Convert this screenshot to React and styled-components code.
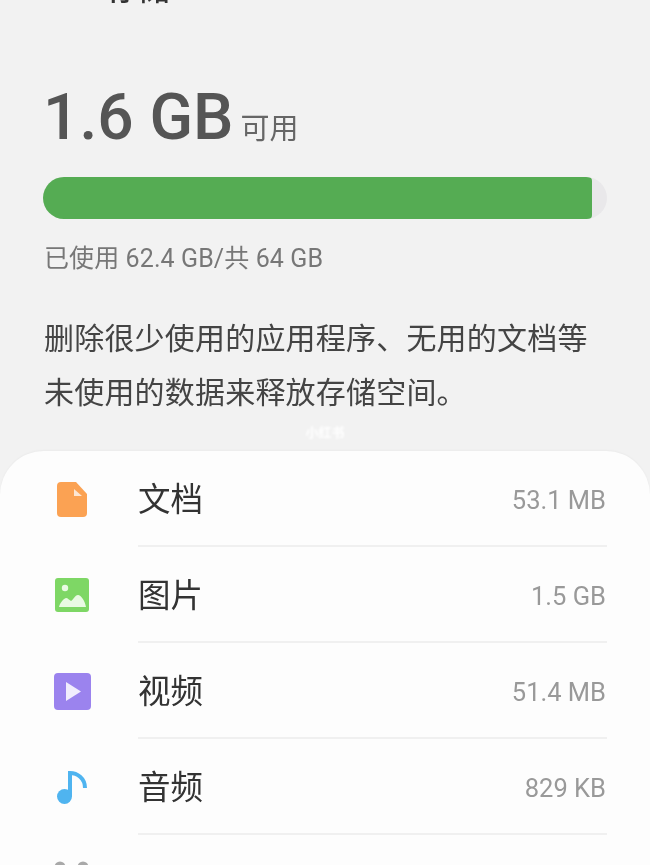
import React from 'react';
import styled, { createGlobalStyle } from 'styled-components';

const GlobalStyle = createGlobalStyle`
  html, body {
    margin: 0;
    padding: 0;
    height: 865px;
    overflow: hidden;
    background: #f2f2f2;
  }
`;

const Page = styled.div`
  width: 650px;
  height: 865px;
  overflow: hidden;
  background: #f2f2f2;
  font-family: Roboto, "Noto Sans CJK SC", sans-serif;
  filter: blur(0.5px);
`;

const TitleClip = styled.div`
  height: 6px;
  padding-left: 106px;
  display: flex;
  align-items: flex-end;
  overflow: hidden;
`;

const Title = styled.div`
  font-size: 32px;
  line-height: 34px;
  flex: none;
  font-weight: 500;
  color: #333;
`;

const Summary = styled.section`
  padding: 72px 43px 0;
`;

const Free = styled.div`
  display: flex;
  align-items: baseline;
  gap: 7px;
  height: 88px;
`;

const FreeSize = styled.span`
  font-size: 64px;
  line-height: 80px;
  font-weight: 500;
  color: #555;
`;

const FreeLabel = styled.span`
  font-size: 29px;
  color: #666;
`;

const Track = styled.div`
  height: 42px;
  margin-top: 11px;
  border-radius: 21px;
  background: #e9e8ea;
  overflow: hidden;
`;

const Fill = styled.div`
  height: 100%;
  background: #55ac53;
  border-radius: 0 4px 4px 0;
`;

const Usage = styled.div`
  margin-top: 22px;
  padding-left: 1px;
  font-size: 25px;
  letter-spacing: 0.1px;
  line-height: 36px;
  color: #777;
`;

const Hint = styled.p`
  margin: 35px 0 0;
  padding-left: 1px;
  font-size: 30px;
  letter-spacing: 0.2px;
  line-height: 54px;
  color: #444;
`;

const Watermark = styled.div`
  height: 22px;
  margin-top: 2px;
  margin-bottom: 7px;
  text-align: center;
  font-size: 13px;
  line-height: 22px;
  font-weight: 700;
  color: #fff;
  filter: blur(0.8px);
`;

const Card = styled.section`
  background: #fdfdfd;
  border-radius: 44px 44px 0 0;
  box-shadow: 0 -1px 2px rgba(0, 0, 0, 0.03);
`;

const Row = styled.div`
  height: 96px;
  display: grid;
  grid-template-columns: 138px 1fr;
  align-items: center;
`;

const IconCell = styled.div`
  display: flex;
  justify-content: center;
  padding-left: 6px;
`;

const RowBody = styled.div`
  height: 100%;
  margin-right: 43px;
  display: flex;
  align-items: center;
  justify-content: space-between;
  box-sizing: border-box;
  border-bottom: 2px solid #f0f0f0;
`;

const Label = styled.span`
  font-size: 32.5px;
  line-height: 40px;
  color: #333;
  margin-top: 3px;
`;

const Value = styled.span`
  font-size: 25.5px;
  color: #999;
  margin-top: 3px;
  margin-right: 1px;
`;

const DocIcon = () => (
  <svg width="30" height="35" viewBox="0 0 30 35">
    <path d="M4 0h15l11 12v19a4 4 0 0 1-4 4H4a4 4 0 0 1-4-4V4a4 4 0 0 1 4-4z" fill="#fba253" />
    <path d="M17 7l8 7h-8z" fill="#fde6d2" />
  </svg>
);

const ImageIcon = () => (
  <svg width="34" height="34" viewBox="0 0 34 34">
    <rect width="34" height="34" rx="3" fill="#7ed765" />
    <circle cx="10" cy="10" r="3.2" fill="#e9fae3" />
    <path d="M4 29c1-4 4-8 7-9 2 0 3 2 5 3 2-1 4-6 7-6 3 0 7 6 8 12z" fill="#e9fae3" />
  </svg>
);

const VideoIcon = () => (
  <svg width="37" height="37" viewBox="0 0 37 37">
    <rect width="37" height="37" rx="4" fill="#9b83ee" />
    <path d="M12 9l15 9.500-15 9.500z" fill="#f1edfd" />
  </svg>
);

const AudioIcon = () => (
  <svg width="30" height="33" viewBox="0 0 30 33">
    <circle cx="7.500" cy="25.500" r="7.500" fill="#4fb4f0" />
    <path d="M13 25V2c7 0 15 5 15 15" fill="none" stroke="#4fb4f0" strokeWidth="4" />
  </svg>
);

const MoreIcon = () => (
  <svg width="36" height="44" viewBox="0 0 36 44">
    <circle cx="6" cy="6" r="5.500" fill="#a9a9a9" />
    <circle cx="29" cy="6" r="5.500" fill="#a9a9a9" />
  </svg>
);

const rows = [
  { icon: <DocIcon />, label: '文档', value: '53.1 MB' },
  { icon: <ImageIcon />, label: '图片', value: '1.5 GB' },
  { icon: <VideoIcon />, label: '视频', value: '51.4 MB' },
  { icon: <AudioIcon />, label: '音频', value: '829 KB' },
];

const App = () => (
  <Page>
    <GlobalStyle />
    <TitleClip>
      <Title>存储</Title>
    </TitleClip>
    <Summary>
      <Free>
        <FreeSize>1.6 GB</FreeSize>
        <FreeLabel>可用</FreeLabel>
      </Free>
      <Track>
        <Fill style={{ width: `${(549 / 564) * 100}%` }} />
      </Track>
      <Usage>已使用 62.4 GB/共 64 GB</Usage>
      <Hint>删除很少使用的应用程序、无用的文档等未使用的数据来释放存储空间。</Hint>
    </Summary>
    <Watermark>小红书</Watermark>
    <Card>
      {rows.map((row) => (
        <Row key={row.label}>
          <IconCell>{row.icon}</IconCell>
          <RowBody>
            <Label>{row.label}</Label>
            <Value>{row.value}</Value>
          </RowBody>
        </Row>
      ))}
      <Row>
        <IconCell>
          <MoreIcon />
        </IconCell>
      </Row>
    </Card>
  </Page>
);

export default App;
